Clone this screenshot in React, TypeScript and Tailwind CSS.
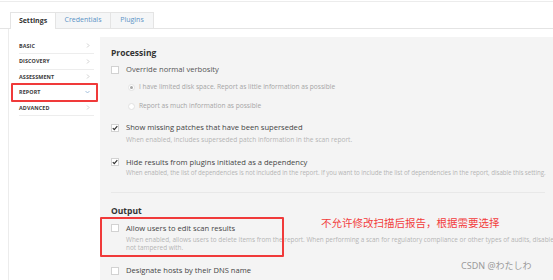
import React from "react";

const Chevron = ({ down = false }: { down?: boolean }) =>
  down ? (
    <svg width="5" height="4" viewBox="0 0 5 4" className="shrink-0">
      <path d="M0.5 1 L2.5 3 L4.5 1" fill="none" stroke="#8fb3d4" strokeWidth="0.8" />
    </svg>
  ) : (
    <svg width="4" height="5" viewBox="0 0 4 5" className="shrink-0">
      <path d="M1 0.5 L3 2.5 L1 4.5" fill="none" stroke="#c4c4c4" strokeWidth="0.8" />
    </svg>
  );

const Box = ({ checked = false }: { checked?: boolean }) => (
  <div className="w-[8px] h-[8px] bg-white border border-[#d2d2d2] shrink-0 flex items-center justify-center">
    {checked && (
      <svg width="6" height="6" viewBox="0 0 6 6">
        <path d="M0.8 3.1 L2.3 4.6 L5.3 1.2" fill="none" stroke="#333" strokeWidth="1.2" />
      </svg>
    )}
  </div>
);

const Radio = ({ on = false }: { on?: boolean }) => (
  <div className="w-[7px] h-[7px] rounded-full bg-white border border-[#e2e2e2] shrink-0 flex items-center justify-center">
    {on && <div className="w-[3px] h-[3px] rounded-full bg-[#a8a8a8]" />}
  </div>
);

const side = ["BASIC", "DISCOVERY", "ASSESSMENT", "REPORT", "ADVANCED"];

export default function App() {
  return (
    <div
      className="relative w-[553px] h-[280px] overflow-hidden bg-white"
      style={{ fontFamily: '"Open Sans", "Noto Sans", sans-serif' }}
    >
      <div className="mt-px h-px bg-[#ececec]" />
      {/* tabs */}
      <div className="flex mt-[10px] h-[17px]">
        <div className="w-[10px] shrink-0 border-b border-[#e4e4e4]" />
        <div className="w-[46px] shrink-0 bg-white border-l border-t border-r border-[#e4e4e4] flex items-center justify-center text-[7px] font-bold text-[#333]">
          Settings
        </div>
        <div className="w-[55px] shrink-0 bg-[#f5f6f7] border-t border-r border-b border-[#e4e4e4] flex items-center justify-center text-[7px] text-[#5b93c6]">
          Credentials
        </div>
        <div className="w-[43px] shrink-0 bg-[#f5f6f7] border-t border-r border-b border-[#e4e4e4] flex items-center justify-center text-[7px] text-[#5b93c6]">
          Plugins
        </div>
        <div className="flex-1 border-b border-[#e4e4e4]" />
      </div>
      <div className="flex h-[251px]">
        <div className="w-[10px] shrink-0 flex justify-end">
          <div className="w-px h-full bg-[#ececec] mr-px" />
        </div>
        {/* sidebar */}
        <div className="w-[90px] shrink-0 bg-white pt-[9.5px] pl-[9px] pr-[6px]">
          {side.map((s) => (
            <div
              key={s}
              className="h-[15.5px] flex items-center justify-between border-b border-[#ededed] pr-[4px]"
            >
              <span className="text-[5.4px] font-bold text-[#3a3a3a] tracking-[0.1px]">{s}</span>
              <Chevron down={s === "REPORT"} />
            </div>
          ))}
        </div>
        {/* content */}
        <div className="flex-1 min-w-0 mt-[8px] bg-[#f4f4f4] pl-[11px] pt-[9.5px] text-[#4a4a4a]">
          <div className="h-[12px] leading-[12px] text-[8.5px] font-bold text-[#333]">Processing</div>
          <div className="mt-[5.5px] h-[12px] flex items-center gap-[7px]">
            <Box />
            <span className="text-[7.6px] text-[#555]">Override normal verbosity</span>
          </div>
          <div className="mt-[5px] h-[12px] flex items-center gap-[4px] pl-[17px]">
            <Radio on />
            <span className="text-[6.6px] text-[#a5a5a5]">
              I have limited disk space. Report as little information as possible
            </span>
          </div>
          <div className="mt-[7px] h-[12px] flex items-center gap-[4px] pl-[17px]">
            <Radio />
            <span className="text-[6.6px] text-[#a5a5a5]">Report as much information as possible</span>
          </div>
          <div className="mt-[10px] h-[12px] flex items-center gap-[7px]">
            <Box checked />
            <span className="text-[7.6px] text-[#444]">Show missing patches that have been superseded</span>
          </div>
          <div className="mt-[1.75px] pl-[15px] text-[6.6px] leading-[7.5px] text-[#b4b4b4] whitespace-nowrap">
            When enabled, includes superseded patch information in the scan report.
          </div>
          <div className="mt-[13px] h-[12px] flex items-center gap-[7px]">
            <Box checked />
            <span className="text-[7.6px] text-[#444]">Hide results from plugins initiated as a dependency</span>
          </div>
          <div className="mt-[1px] pl-[15px] text-[6.2px] tracking-[-0.05px] leading-[7.5px] text-[#b4b4b4] whitespace-nowrap">
            When enabled, the list of dependencies is not included in the report. If you want to include the list of
            dependencies in the report, disable this setting.
          </div>
          <div className="mt-[15.5px] h-px bg-[#e8e8e8] mr-[8px]" />
          <div className="mt-[12px] h-[12px] leading-[12px] text-[8.5px] font-bold text-[#333]">Output</div>
          <div className="mt-[5px] h-[12px] flex items-center gap-[7px]">
            <Box />
            <span className="text-[7.6px] text-[#444]">Allow users to edit scan results</span>
          </div>
          <div className="mt-[2px] pl-[15px] text-[6.4px] leading-[7.5px] text-[#b4b4b4] whitespace-nowrap">
            <div>
              When enabled, allows users to delete items from the report. When performing a scan for regulatory
              compliance or other types of audits, disable the setting to show that the scan was
            </div>
            <div>not tampered with.</div>
          </div>
          <div className="mt-[13.75px] h-[12px] flex items-center gap-[7px]">
            <Box />
            <span className="text-[7.6px] text-[#444]">Designate hosts by their DNS name</span>
          </div>
        </div>
      </div>

      {/* annotations */}
      <div className="absolute left-[10.5px] top-[83px] w-[87px] h-[19px] border-2 border-[#f03a3a] rounded-[1px]" />
      <div className="absolute left-[100px] top-[217px] w-[184px] h-[40px] border-2 border-[#f03a3a] rounded-[1px]" />
      <div
        className="absolute left-[321px] top-[216px] text-[10.5px] leading-[14px] text-[#f23c3c] whitespace-nowrap"
        style={{ fontFamily: '"Noto Sans CJK SC", sans-serif' }}
      >
        不允许修改扫描后报告，根据需要选择
      </div>
      <div
        className="absolute left-[461px] top-[259px] text-[9px] leading-[14px] text-[#9a9a9a] whitespace-nowrap"
        style={{ fontFamily: '"Noto Sans", "Noto Sans CJK JP", sans-serif' }}
      >
        CSDN @わたしわ
      </div>
    </div>
  );
}
